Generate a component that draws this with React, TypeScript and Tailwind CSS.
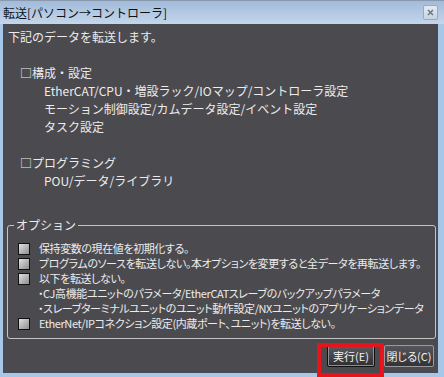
import { useState } from 'react';

const FONT = "font-['Noto_Sans_CJK_JP',sans-serif]";
const NARROW = "text-[11px] tracking-[-0.4px] [font-feature-settings:'palt']";

const options = [
  { id: 'init', label: '保持変数の現在値を初期化する。' },
  { id: 'source', label: 'プログラムのソースを転送しない。本オプションを変更すると全データを再転送します。' },
  {
    id: 'skip',
    label: '以下を転送しない。',
    notes: [
      '・CJ高機能ユニットのパラメータ/EtherCATスレーブのバックアップパラメータ',
      '・スレーブターミナルユニットのユニット動作設定/NXユニットのアプリケーションデータ',
    ],
  },
  { id: 'eip', label: 'EtherNet/IPコネクション設定(内蔵ポート、ユニット)を転送しない。' },
];

const Checkbox = ({ checked, onClick }: { checked: boolean; onClick: () => void }) => (
  <button
    type="button"
    onClick={onClick}
    className="w-[12px] h-[12px] border border-[#111] bg-gradient-to-br from-[#e2e2e2] to-[#8e8e8e] flex items-center justify-center shrink-0"
  >
    {checked && <span className="w-[6px] h-[6px] bg-[#222]" />}
  </button>
);

const App = () => {
  const [checked, setChecked] = useState<Record<string, boolean>>({});

  const toggle = (id: string) => setChecked({ ...checked, [id]: !checked[id] });

  return (
    <div className={`relative w-[444px] h-[377px] bg-[#a7c7e8] flex flex-col text-[12px] ${FONT}`}>
      {/* title bar */}
      <div className="h-[24px] flex items-center justify-between pl-[3px] pr-[6px] bg-gradient-to-b from-[#a2bbd9] to-[#c3d6ec] border-t border-[#8a9aae]">
        <span className="text-[#111] leading-[18px]">転送[パソコン→コントローラ]</span>
        <button
          type="button"
          className="w-[15px] h-[15px] rounded-[2px] border border-[#9aa9bc] bg-gradient-to-b from-[#e4eaf1] to-[#c9d4e1] flex items-center justify-center"
        >
          <svg width="7" height="7" viewBox="0 0 7 7">
            <path d="M1 1 L6 6 M6 1 L1 6" stroke="#6d7a8a" strokeWidth="1.6" />
          </svg>
        </button>
      </div>

      {/* body */}
      <div className="flex-1 min-w-0 ml-[3px] mr-[6px] mb-[4px] bg-[#4b4a4f] text-[#ececec] flex flex-col pt-[4px] leading-[18px]">
        <div className="pl-[5px]">下記のデータを転送します。</div>
        <div className="h-[18px]" />
        <div className="pl-[17px]">□構成・設定</div>
        <div className="pl-[41px]">
          <div>EtherCAT/CPU・増設ラック/IOマップ/コントローラ設定</div>
          <div>モーション制御設定/カムデータ設定/イベント設定</div>
          <div>タスク設定</div>
        </div>
        <div className="h-[18px]" />
        <div className="pl-[17px]">□プログラミング</div>
        <div className="pl-[41px]">POU/データ/ライブラリ</div>

        <fieldset className="min-w-0 mt-[26px] ml-[4px] mr-[2px] border border-[#c4c4c4] rounded-[3px] px-[10px] pt-[7px] pb-[7px] leading-[15px]">
          <legend className="ml-[-4px] px-[2px] leading-[18px]">オプション</legend>
          <div className={NARROW}>
            {options.map((opt) => (
              <div key={opt.id}>
                <div className="flex items-center gap-[9px] h-[15px]">
                  <Checkbox checked={!!checked[opt.id]} onClick={() => toggle(opt.id)} />
                  <span className="whitespace-nowrap">{opt.label}</span>
                </div>
                {opt.notes?.map((n) => (
                  <div key={n} className="pl-[20px] whitespace-nowrap">{n}</div>
                ))}
              </div>
            ))}
          </div>
        </fieldset>

        <div className="flex justify-end gap-[9px] pr-[4px] mt-[6px] text-[11px] [font-feature-settings:'palt'] whitespace-nowrap">
          <button
            type="button"
            className="w-[48px] h-[22px] rounded-[2px] border border-[#111] shadow-[inset_0_0_0_1px_#8d8d92] bg-gradient-to-b from-[#5b5a60] to-[#2f2f33] text-[#f2f2f2] leading-[18px]"
          >
            実行(E)
          </button>
          <button
            type="button"
            className="w-[50px] h-[22px] rounded-[2px] border border-[#9a9a9e] bg-gradient-to-b from-[#56555b] to-[#333337] text-[#f2f2f2] leading-[18px]"
          >
            閉じる(C)
          </button>
        </div>
      </div>

      {/* annotation highlight */}
      <div className="absolute left-[317px] top-[343px] w-[67px] h-[34px] border-[4px] border-[#e8141c]" />
    </div>
  );
};

export default App;
